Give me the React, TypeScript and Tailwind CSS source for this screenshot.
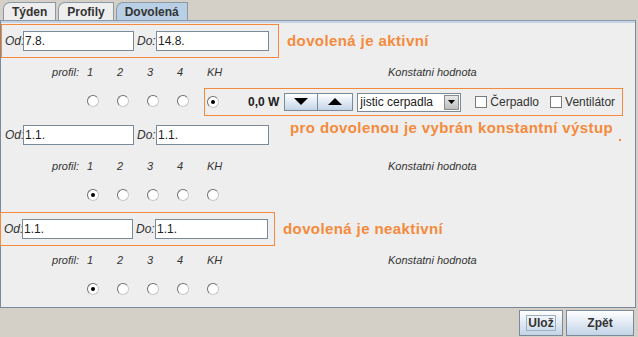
import React from 'react'

const font = { fontFamily: '"Liberation Sans", Arial, sans-serif' }

function Radio({ checked = false }: { checked?: boolean }) {
  return (
    <span className="inline-flex h-[12px] w-[12px] items-center justify-center rounded-full border border-t-[#6f6f6f] border-l-[#6f6f6f] border-r-[#c8c8c8] border-b-[#c8c8c8] bg-white">
      {checked && <span className="h-[4px] w-[4px] rounded-full bg-black" />}
    </span>
  )
}

function Check({ label }: { label: string }) {
  return (
    <span className="flex items-center gap-[3px] text-[12px] text-[#333]">
      <span className="h-[12px] w-[12px] border border-[#7a7a7a] bg-white" />
      {label}
    </span>
  )
}

function Arrow({ up = false }: { up?: boolean }) {
  return (
    <svg width="14" height="8" viewBox="0 0 14 8">
      {up ? <polygon points="0,7 14,7 7,0" fill="#000" /> : <polygon points="0,0 14,0 7,7" fill="#000" />}
    </svg>
  )
}

interface SectionProps {
  od: string
  doo: string
  boxClass?: string
  note?: string
  sideNote?: string
  selected: number
  controls?: boolean
}

function Section({ od, doo, boxClass, note, sideNote, selected, controls }: SectionProps) {
  return (
    <div className="flex h-[94px] flex-col">
      {/* Od / Do row */}
      <div className="flex h-[34px] items-start">
        <div
          className={
            'flex h-[34px] items-center self-center border ' +
            (boxClass ? boxClass : 'w-[277px] border-transparent')
          }
        >
          <span className="ml-[3px] w-[18px] text-[12px] italic text-[#333]">Od:</span>
          <span className="flex h-[20px] w-[111px] items-center border border-[#7a8a99] bg-white pl-[1px] text-[12px] text-[#222]">
            {od}
          </span>
          <span className="ml-[3px] w-[19px] text-[12px] italic text-[#333]">Do:</span>
          <span className="flex h-[20px] w-[113px] items-center border border-[#7a8a99] bg-white pl-[1px] text-[12px] text-[#222]">
            {doo}
          </span>
        </div>
        {note && (
          <span className="ml-[8px] self-center text-[15px] font-bold leading-[16px] tracking-[0.4px] text-[#f58a3c]">
            {note}
          </span>
        )}
        {sideNote && (
          <>
            <span className="ml-[12px] mt-[2px] text-[15px] font-bold leading-[16px] tracking-[0.4px] text-[#f58a3c]">
              {sideNote}
            </span>
            <span className="ml-[6px] mt-[21px] h-[2px] w-[2px] bg-[#f58a3c]" />
          </>
        )}
      </div>

      {/* profile labels */}
      <div className="flex h-[28px] items-center text-[11px] italic text-[#333]">
        <span className="w-[86px] pr-[8px] text-right">profil:</span>
        <span className="w-[30px]">1</span>
        <span className="w-[30px]">2</span>
        <span className="w-[30px]">3</span>
        <span className="w-[30px]">4</span>
        <span className="w-[30px]">KH</span>
        <span className="ml-[151px]">Konstatni hodnota</span>
      </div>

      {/* radios */}
      <div className="flex h-[30px] items-center">
        <span className="w-[86px]" />
        {[0, 1, 2, 3].map((i) => (
          <span key={i} className="flex w-[30px]">
            <Radio checked={selected === i} />
          </span>
        ))}
        {controls ? (
          <div className="-ml-[3px] mt-[2px] flex h-[28px] w-[419px] items-center border border-[#f58a3c] pl-[2px]">
            <Radio checked={selected === 4} />
            <span className="ml-[29px] text-[12px] font-bold text-[#222]">0,0 W</span>
            <div className="ml-[5px] flex">
              <span className="flex h-[18px] w-[34px] items-center justify-center border border-[#7a8a99] bg-linear-to-b from-white to-[#c3d4e7]">
                <Arrow />
              </span>
              <span className="flex h-[18px] w-[35px] items-center justify-center border border-l-0 border-[#7a8a99] bg-linear-to-b from-white to-[#c3d4e7]">
                <Arrow up />
              </span>
            </div>
            <div className="ml-[4px] flex h-[19px] w-[104px] items-center border border-[#7a8a99] bg-white">
              <span className="flex-1 pl-[2px] text-[12px] text-[#222]">jistic cerpadla</span>
              <span className="mr-[1px] flex h-[15px] w-[15px] items-center justify-center border border-[#8a8a8a] bg-linear-to-b from-[#e8e8e8] to-[#bdbdbd]">
                <svg width="7" height="4" viewBox="0 0 7 4">
                  <polygon points="0,0 7,0 3.5,4" fill="#000" />
                </svg>
              </span>
            </div>
            <span className="ml-[14px]">
              <Check label="Čerpadlo" />
            </span>
            <span className="ml-[11px]">
              <Check label="Ventilátor" />
            </span>
          </div>
        ) : (
          <span className="flex w-[30px]">
            <Radio checked={selected === 4} />
          </span>
        )}
      </div>
    </div>
  )
}

function Tab({ label, active = false }: { label: string; active?: boolean }) {
  return (
    <div
      className={
        'flex h-[18px] items-center rounded-tl-[7px] border border-b-0 border-[#8c98a6] px-[8px] text-[12px] font-bold text-[#333] ' +
        (active ? 'bg-[#b8cfe5]' : 'bg-[#eeeeee]')
      }
    >
      {label}
    </div>
  )
}

export default function App() {
  return (
    <div className="h-[337px] w-[638px] overflow-hidden bg-[#d4d0c8]" style={font}>
      {/* tabs */}
      <div className="flex h-[20px] items-end gap-[2px] pl-[3px]">
        <Tab label="Týden" />
        <Tab label="Profily" />
        <Tab label="Dovolená" active />
      </div>

      {/* panel */}
      <div className="h-[288px] w-[636px] border border-[#7a8a99] border-t-[#8c98a6] bg-[#eeeeee]">
        <div className="h-[2px] bg-[#c4d4e6]" />
        <div className="pt-[1px]">
          <Section
            od="7.8."
            doo="14.8."
            boxClass="w-[278px] border-[#f58a3c]"
            note="dovolená je aktivní"
            selected={4}
            controls
          />
          <Section od="1.1." doo="1.1." sideNote="pro dovolenou je vybrán konstantní výstup" selected={0} />
          <Section
            od="1.1."
            doo="1.1."
            boxClass="-ml-[1px] w-[275px] border-[#f58a3c]"
            note="dovolená je neaktivní"
            selected={0}
          />
        </div>
      </div>

      {/* buttons */}
      <div className="mt-[2px] flex justify-end gap-[3px] pr-[4px]">
        <button className="flex h-[26px] w-[44px] items-center justify-center border border-[#7a8a99] bg-linear-to-b from-white to-[#c3d4e7] text-[12px] font-bold text-[#333]">
          <span className="border border-[#9fb0c2] px-[1px] leading-[14px]">Ulož</span>
        </button>
        <button className="flex h-[26px] w-[68px] items-center justify-center border border-[#7a8a99] bg-linear-to-b from-white to-[#c3d4e7] text-[12px] font-bold text-[#333]">
          Zpět
        </button>
      </div>
    </div>
  )
}
